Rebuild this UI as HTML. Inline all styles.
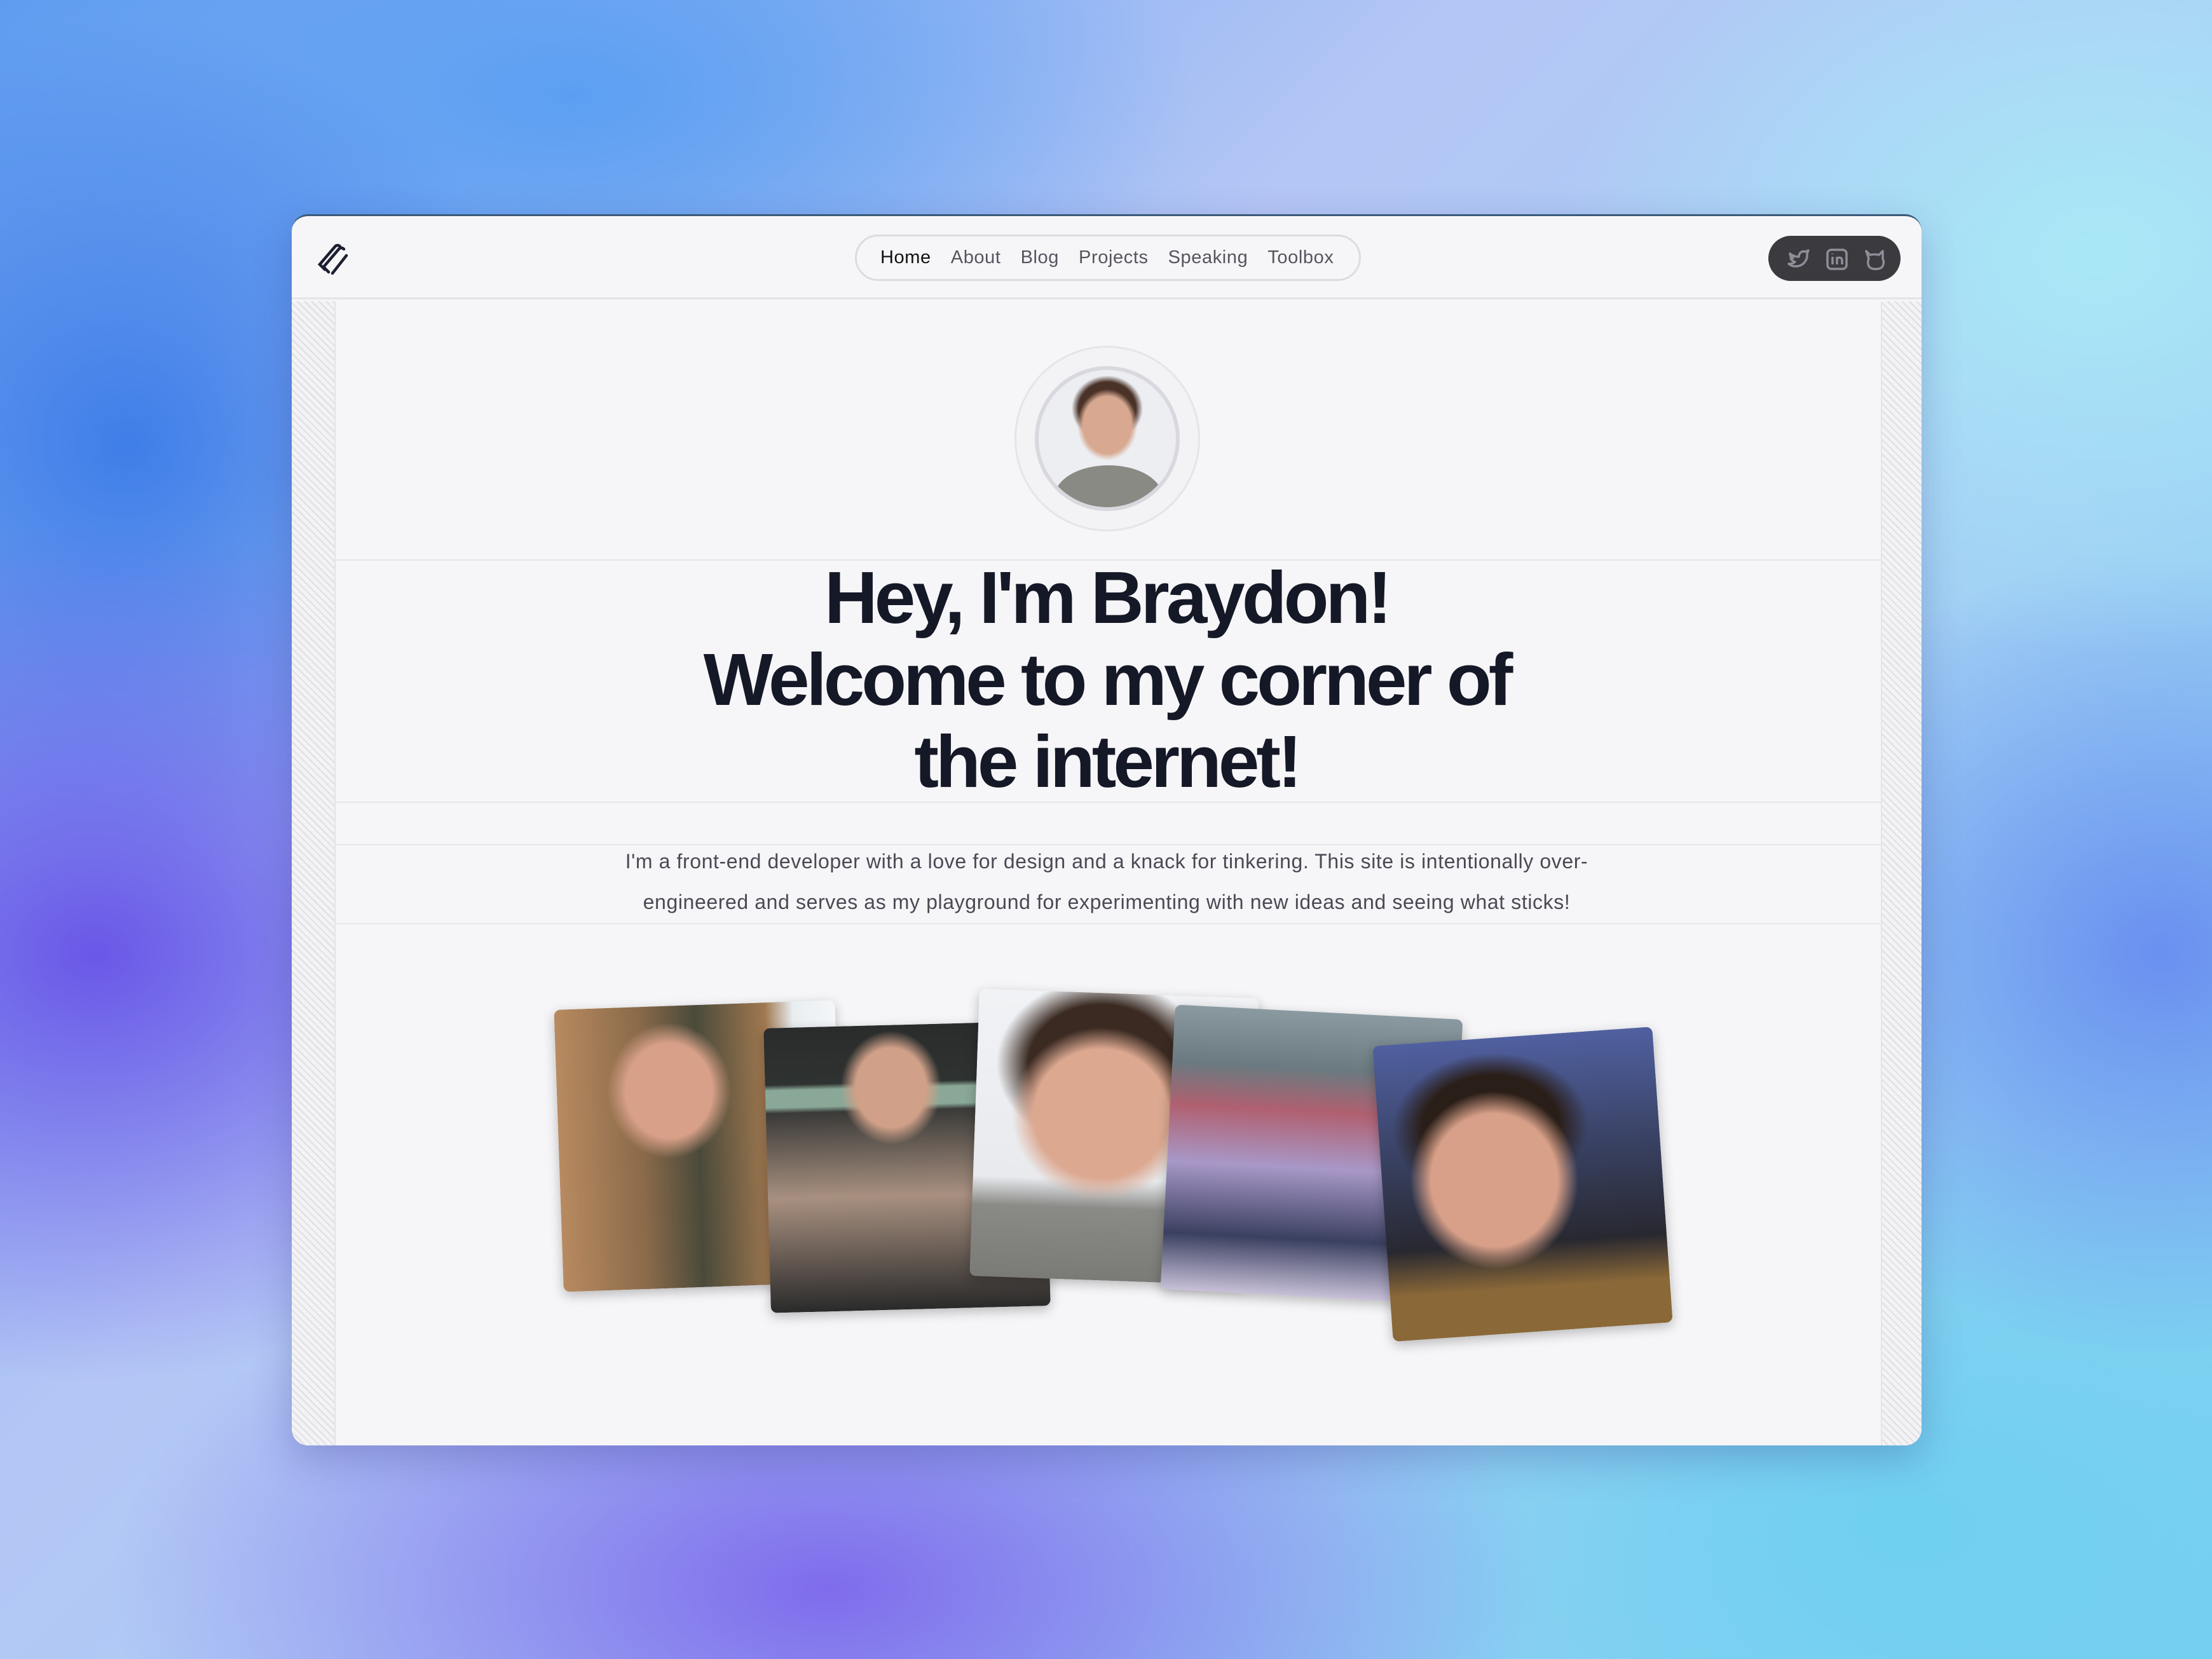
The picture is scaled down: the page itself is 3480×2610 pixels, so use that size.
<!DOCTYPE html>
<html><head><meta charset="utf-8"><style>
*{margin:0;padding:0;box-sizing:border-box}
html,body{width:3480px;height:2610px;overflow:hidden}
body{position:relative;font-family:"Liberation Sans",sans-serif;
background:
radial-gradient(ellipse 1100px 900px at 150px 1500px,#6a58e8 0%,rgba(106,88,232,0) 75%),
radial-gradient(ellipse 1500px 800px at 1300px 2500px,#7f6cec 0%,rgba(127,108,236,0) 75%),
radial-gradient(ellipse 900px 900px at 200px 700px,#3f7ee8 0%,rgba(63,126,232,0) 75%),
radial-gradient(ellipse 1400px 700px at 900px 150px,#5c9ff2 0%,rgba(92,159,242,0) 70%),
radial-gradient(ellipse 1200px 900px at 3300px 400px,#a8e8f6 0%,rgba(168,232,246,0) 70%),
radial-gradient(ellipse 1000px 900px at 3400px 1500px,#6a90f0 0%,rgba(106,144,240,0) 70%),
radial-gradient(ellipse 1300px 900px at 3000px 2400px,#6fd0f0 0%,rgba(111,208,240,0) 70%),
linear-gradient(135deg,#5f9cf0 0%,#b4c6f5 38%,#a9cef5 60%,#78d0f0 100%);}
.win{position:absolute;left:459px;top:337px;width:2564px;height:1937px;background:#f6f6f8;border-radius:26px;overflow:hidden;border-top:3px solid #3a5a78;box-shadow:0 20px 60px rgba(40,40,120,.25)}
.hdr{position:absolute;left:0;top:0;width:100%;height:131px;border-bottom:3px solid #e3e3e8}
.nav{position:absolute;left:886px;top:29px;width:796px;height:73px;border:3px solid #dcdce0;border-radius:40px;display:flex;align-items:center;padding-left:37px;gap:31px;font-size:29px;letter-spacing:.6px;color:#55555f}
.nav b{font-weight:normal;color:#111}
.soc{position:absolute;left:2323px;top:31px;width:208px;height:71px;background:#3a3a3f;border-radius:36px}
.stripe{position:absolute;top:134px;bottom:0;width:69px;background:repeating-linear-gradient(45deg,#f3f3f5 0 6px,#dedee3 6px 8px);}
.line{position:absolute;left:69px;right:64px;height:2px;background:#e6e6ea}
h1{position:absolute;left:0;width:100%;text-align:center;top:536px;font-size:116px;line-height:129px;letter-spacing:-5px;color:#151826;font-weight:bold;font-family:"Liberation Sans",sans-serif}
p{position:absolute;left:0;width:100%;text-align:center;top:983px;font-size:32px;letter-spacing:.6px;line-height:64px;color:#4a4a55}
.ph{position:absolute;border-radius:10px;box-shadow:0 6px 18px rgba(0,0,0,.25);overflow:hidden}
</style></head><body>
<div class="win">
<div class="hdr">
<svg style="position:absolute;left:38px;top:38px" width="56" height="56" viewBox="0 0 56 56"><g fill="none" stroke="#1c2030" stroke-width="4.5" stroke-linecap="round"><path d="M14 46 L6 38 L30 10 a5 5 0 0 1 8 0"/><path d="M20 50 L12 42 L36 14 a5 5 0 0 1 8 0"/><path d="M26 52 L48 24"/></g></svg>
<div class="nav"><b>Home</b><span>About</span><span>Blog</span><span>Projects</span><span>Speaking</span><span>Toolbox</span></div>
<div class="soc"><svg width="208" height="71" viewBox="0 0 208 71" fill="none" stroke="#8e8e98" stroke-width="3.5" stroke-linejoin="round"><path d="M34 28c4 3 9 5 14 5 0-6 5-10 10-8l5-2-2 5c1 10-6 20-18 20-5 0-9-2-11-4 4 0 8-1 10-3-4-1-6-3-7-6l4 0c-4-2-5-5-5-7z"/><rect x="93" y="22" width="30" height="30" rx="6"/><path d="M101 33v12M101 28v1M108 45v-12M108 37c0-3 8-5 8 2v6"/><path d="M154 24l6 6c4-1 10-1 14 0l6-6v12c2 4 2 10-2 14-4 3-14 3-18 0-4-4-4-10-2-14z"/></svg></div>
</div>
<div class="stripe" style="left:0;border-right:2px solid #e3e3e8"></div>
<div class="stripe" style="right:0;width:64px;border-left:2px solid #e3e3e8"></div>
<div class="line" style="top:540px"></div>
<div class="line" style="top:921px"></div>
<div class="line" style="top:988px"></div>
<div class="line" style="top:1112px"></div>
<div style="position:absolute;left:1137px;top:204px;width:292px;height:292px;border-radius:50%;border:3px solid #e4e4ea;background:#f3f3f6"></div>
<div style="position:absolute;left:1169px;top:236px;width:228px;height:228px;border-radius:50%;border:6px solid #d8d8de;background:radial-gradient(ellipse 22% 26% at 50% 40%,#d8a890 0 80%,transparent 100%),radial-gradient(ellipse 26% 24% at 50% 28%,#4a3228 0 80%,transparent 100%),#eceef2;overflow:hidden"><div style="position:absolute;left:25px;top:150px;width:170px;height:100px;border-radius:50% 50% 0 0;background:#8a8a85"></div></div>
<h1>Hey, I'm Braydon!<br>Welcome to my corner of<br>the internet!</h1>
<p>I'm a front-end developer with a love for design and a knack for tinkering. This site is intentionally over-<br>engineered and serves as my playground for experimenting with new ideas and seeing what sticks!</p>
<div class="ph" style="left:420px;top:1241px;width:442px;height:444px;transform:rotate(-2deg);background:radial-gradient(ellipse 22% 24% at 40% 30%,#d8a088 0 70%,transparent 100%),linear-gradient(90deg,#b88a60 0%,#8a6a4a 30%,#4a4a3a 50%,#a07850 75%,#e8eef0 85%,#f4f6f8 100%)"></div>
<div class="ph" style="left:748px;top:1272px;width:440px;height:448px;transform:rotate(-1.5deg);background:radial-gradient(ellipse 18% 20% at 45% 22%,#d0a088 0 70%,transparent 100%),linear-gradient(180deg,#2a2c2c 0%,#2e3230 20%,#8aa898 22%,#8aa898 28%,#3a3a38 30%,#a89080 60%,#2a2a2a 100%)"></div>
<div class="ph" style="left:1074px;top:1223px;width:440px;height:452px;transform:rotate(2deg);background:radial-gradient(ellipse 32% 30% at 45% 42%,#dca890 0 75%,transparent 100%),radial-gradient(ellipse 38% 30% at 45% 25%,#3a2a22 0 70%,transparent 100%),linear-gradient(180deg,#f0f2f5 0%,#e8eaee 65%,#8a8a86 75%,#7a7a76 100%)"></div>
<div class="ph" style="left:1378px;top:1252px;width:453px;height:448px;transform:rotate(3deg);background:linear-gradient(180deg,#8a9aa0 0%,#6a7a80 20%,#b06070 35%,#a898c8 55%,#3a4060 80%,#c8c0d8 100%)"></div>
<div class="ph" style="left:1716px;top:1290px;width:441px;height:466px;transform:rotate(-4deg);background:radial-gradient(ellipse 30% 30% at 40% 48%,#d8a088 0 75%,transparent 100%),radial-gradient(ellipse 35% 25% at 40% 30%,#2a1e18 0 70%,transparent 100%),linear-gradient(180deg,#5060a0 0%,#384060 40%,#282830 70%,#8a6838 85%,#8a6838 100%)"></div>
</div>
</body></html>
